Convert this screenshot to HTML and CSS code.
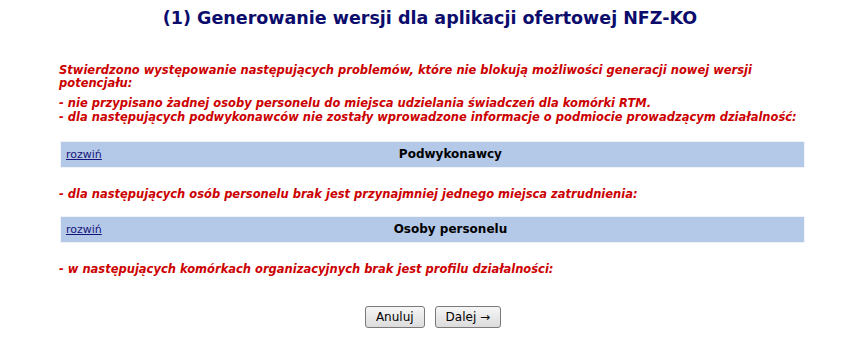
FILE: index.html
```html
<!DOCTYPE html>
<html lang="pl">
<head>
<meta charset="utf-8">
<title>Generowanie wersji</title>
<link rel="stylesheet" href="styles.css">
</head>
<body>
<h1 class="title">(1) Generowanie wersji dla aplikacji ofertowej NFZ-KO</h1>
<div class="content">
  <p class="warn warn-head">Stwierdzono występowanie następujących problemów, które nie blokują możliwości generacji nowej wersji potencjału:</p>
  <p class="warn">- nie przypisano żadnej osoby personelu do miejsca udzielania świadczeń dla komórki RTM.</p>
  <p class="warn">- dla następujących podwykonawców nie zostały wprowadzone informacje o podmiocie prowadzącym działalność:</p>
  <div class="bar bar-first">
    <a class="expand" href="#">rozwiń</a>
    <span class="bar-title">Podwykonawcy</span>
  </div>
  <p class="warn warn-section">- dla następujących osób personelu brak jest przynajmniej jednego miejsca zatrudnienia:</p>
  <div class="bar bar-second">
    <a class="expand" href="#">rozwiń</a>
    <span class="bar-title">Osoby personelu</span>
  </div>
  <p class="warn warn-section">- w następujących komórkach organizacyjnych brak jest profilu działalności:</p>
  <div class="actions">
    <button class="btn" type="button">Anuluj</button>
    <button class="btn" type="button">Dalej →</button>
  </div>
</div>
</body>
</html>
```

FILE: styles.css
```css
html, body {
  margin: 0;
  padding: 0;
  background: #ffffff;
}

body {
  font-family: "DejaVu Sans", Verdana, sans-serif;
}

.title {
  margin: 0;
  padding-top: 7px;
  text-align: center;
  font-size: 17.5px;
  line-height: 22px;
  font-weight: bold;
  color: #0c0c6c;
}

.content {
  width: 745px;
  margin: 35px 0 0 59px;
}

.warn {
  margin: 0;
  font-size: 11.5px;
  line-height: 14px;
  font-weight: bold;
  font-style: italic;
  color: #cc0000;
}

.warn-head {
  line-height: 13px;
  margin-bottom: 6px;
}

.warn-section {
  margin-top: 20px;
}

.bar {
  display: grid;
  grid-template-columns: auto 1fr;
  align-items: baseline;
  margin-left: 2px;
  height: 25px;
  padding: 5px 5px 0;
  box-sizing: border-box;
  background: #b4c8e8;
  box-shadow: 0 0 0 1px #f0f4fa;
}

.bar-first {
  margin-top: 18px;
}

.bar-second {
  margin-top: 16px;
}

.expand {
  font-size: 11px;
  line-height: 14px;
  color: #14147a;
  text-decoration: underline;
}

.bar-title {
  justify-self: center;
  font-size: 12px;
  font-weight: bold;
  color: #000000;
  line-height: 14px;
}

.actions {
  display: flex;
  justify-content: center;
  gap: 10px;
  margin-top: 30px;
  padding-left: 3px;
}

.btn {
  font-family: "DejaVu Sans", Verdana, sans-serif;
  font-size: 12px;
  line-height: 14px;
  color: #000;
  padding: 3px 10px;
  height: 22px;
  border: 1px solid #7a7a7a;
  border-radius: 3px;
  background: linear-gradient(#f6f6f6, #dcdcdc);
}
```
